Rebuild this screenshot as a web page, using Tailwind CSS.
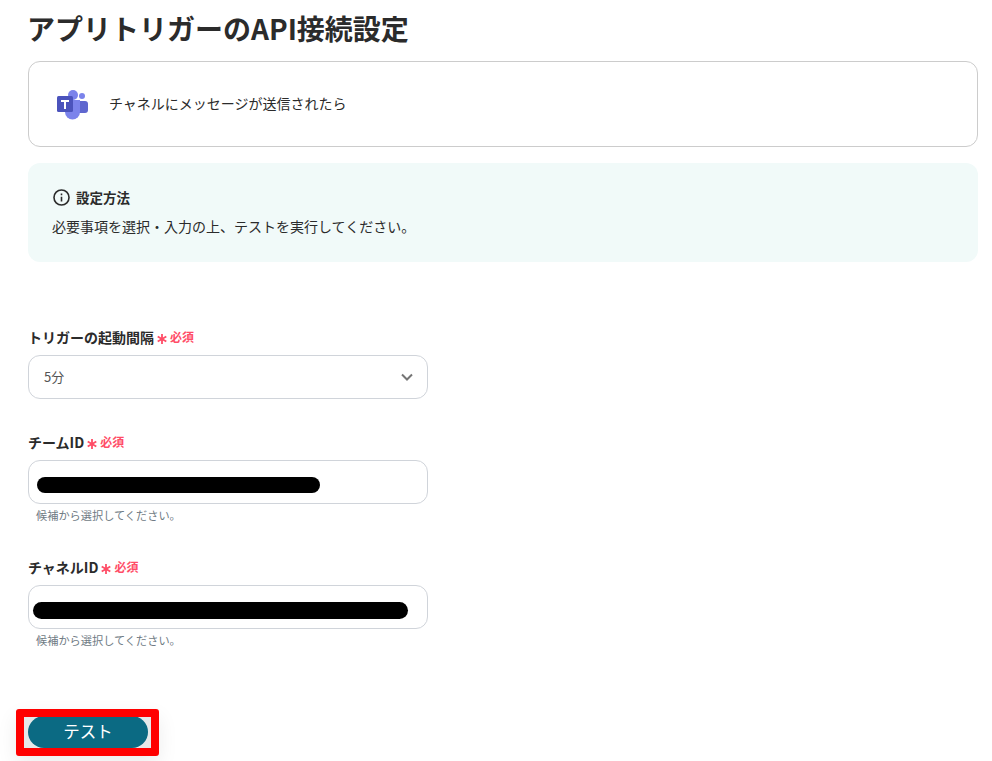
<!DOCTYPE html>
<html lang="ja">
<head>
<meta charset="UTF-8">
<title>アプリトリガーのAPI接続設定</title>
<script src="https://cdn.jsdelivr.net/npm/@tailwindcss/browser@4"></script>
</head>
<body class="bg-white h-[761px] overflow-hidden font-['Noto_Sans_CJK_JP','Noto_Sans',sans-serif] text-[#2b2b2b]">
<div class="w-[950px] ml-[28px]">
  <h1 class="h-[61px] pb-[5px] -ml-[1px] flex items-center text-[28px] font-bold leading-none">アプリトリガーのAPI接続設定</h1>

  <div class="h-[86px] border border-[#cccccc] rounded-[12px] flex items-center pl-[25px] gap-[19px]">
    <svg class="w-[36px] h-[36px]" viewBox="0 0 36 36">
      <circle cx="28" cy="10" r="3" fill="#7b83eb"/>
      <rect x="22" y="15" width="12" height="12" rx="3" fill="#5f67cf"/>
      <circle cx="19" cy="9" r="5" fill="#7b83eb"/>
      <path d="M11 14h15v12a7 7 0 0 1-15 0z" fill="#7b83eb"/>
      <rect x="3" y="10" width="16" height="16" rx="1.500" fill="#4b53bc"/>
      <path d="M7 14h8v2h-3v7h-2v-7H7z" fill="#fff"/>
    </svg>
    <span class="text-[14px] pb-[2px]">チャネルにメッセージが送信されたら</span>
  </div>

  <div class="mt-[16px] h-[99px] bg-[#f1faf9] rounded-[12px] pl-[24px] pt-[24px]">
    <div class="flex items-center gap-[5px] h-[20px]">
      <svg class="w-[19px] h-[19px] text-[#2b2b2b]" viewBox="0 0 24 24" fill="none" stroke="currentColor" stroke-width="2">
        <circle cx="12" cy="12" r="9.500"/>
        <path d="M12 11v6M12 7v2"/>
      </svg>
      <span class="text-[13.5px] font-bold">設定方法</span>
    </div>
    <p class="mt-[9px] text-[14px] leading-[20px]">必要事項を選択・入力の上、テストを実行してください。</p>
  </div>

  <div class="mt-[65px] h-[20px] flex items-center text-[14px] font-bold">
    <span>トリガーの起動間隔</span>
    <svg class="ml-[3px] mt-[3px] w-[10px] h-[10px]" viewBox="0 0 10 10" stroke="#ff4d67" stroke-width="1.800"><path d="M5 0v10M.7 2.500l8.600 5M.7 7.500l8.600-5"/></svg>
    <span class="ml-[3px] text-[#ff4d67] text-[12px]">必須</span>
  </div>
  <div class="mt-[8px] w-[400px] h-[44px] border border-[#d0d4da] rounded-[12px] flex items-center justify-between pl-[15px] pr-[14px] text-[13px] text-[#555555]">
    <span>5分</span>
    <svg class="w-[12px] h-[8px]" viewBox="0 0 12 8" fill="none" stroke="#757575" stroke-width="2"><path d="M1 1.500l5 5 5-5"/></svg>
  </div>

  <div class="mt-[33px] h-[20px] flex items-center text-[14px] font-bold">
    <span>チームID</span>
    <svg class="ml-[3px] mt-[3px] w-[10px] h-[10px]" viewBox="0 0 10 10" stroke="#ff4d67" stroke-width="1.800"><path d="M5 0v10M.7 2.500l8.600 5M.7 7.500l8.600-5"/></svg>
    <span class="ml-[3px] text-[#ff4d67] text-[12px]">必須</span>
  </div>
  <div class="mt-[8px] w-[400px] h-[44px] border border-[#d0d4da] rounded-[12px] flex items-center pl-[8px]">
    <div class="mt-[5px] w-[283px] h-[16px] bg-black rounded-full"></div>
  </div>
  <p class="mt-[3px] pl-[8px] text-[11.2px] leading-[16px] text-[#6f7b84]">候補から選択してください。</p>

  <div class="mt-[34px] h-[20px] flex items-center text-[14px] font-bold">
    <span>チャネルID</span>
    <svg class="ml-[3px] mt-[3px] w-[10px] h-[10px]" viewBox="0 0 10 10" stroke="#ff4d67" stroke-width="1.800"><path d="M5 0v10M.7 2.500l8.600 5M.7 7.500l8.600-5"/></svg>
    <span class="ml-[3px] text-[#ff4d67] text-[12px]">必須</span>
  </div>
  <div class="mt-[8px] w-[400px] h-[44px] border border-[#d0d4da] rounded-[12px] flex items-center pl-[4px]">
    <div class="mt-[7px] w-[375px] h-[17px] bg-black rounded-full"></div>
  </div>
  <p class="mt-[3px] pl-[8px] text-[11.2px] leading-[16px] text-[#6f7b84]">候補から選択してください。</p>
</div>

<div class="mt-[61px] ml-[16px] w-[143px] h-[47px] border-[8px] border-[#ff0000] rounded-[3px] bg-[#e6e9ea] overflow-hidden shadow-[0_8px_20px_rgba(0,0,0,0.08)]">
  <div class="ml-[4px] -mt-[1px] w-[120px] h-[32px] pb-[1px] bg-[#0b6a83] rounded-full flex items-center justify-center text-white text-[16.5px]">テスト</div>
</div>
</body>
</html>
